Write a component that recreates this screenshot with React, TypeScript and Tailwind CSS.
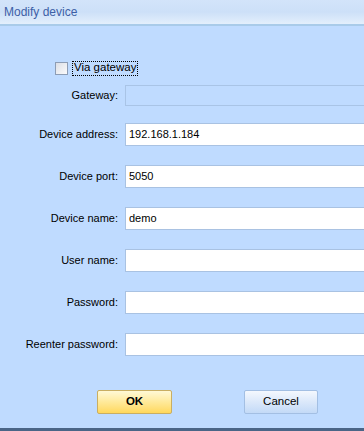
import React from 'react';

const font = { fontFamily: '"Liberation Sans", Arial, sans-serif' };

function Field({ label, value, disabled }: { label: string; value?: string; disabled?: boolean }) {
  return (
    <div className="flex items-center">
      <div className="w-[119px] shrink-0 text-right text-[11px] text-black pr-[1px]">{label}</div>
      <div
        className={
          disabled
            ? 'ml-[6px] h-[21px] w-[250px] shrink-0 border border-[#a9c4e6] bg-[#bfdbff]'
            : 'ml-[6px] h-[23px] w-[250px] shrink-0 border border-[#a9c2e2] bg-white pl-[3px] pt-[3px] text-[11px] leading-[14px] text-black'
        }
      >
        {value}
      </div>
    </div>
  );
}

export default function App() {
  return (
    <div className="w-[364px] h-[431px] bg-[#bfdbff] flex flex-col overflow-hidden" style={font}>
      {/* Title bar */}
      <div className="h-[26px] shrink-0 bg-gradient-to-b from-[#d3e4fa] via-[#cde0f8] to-[#e3effc] border-b-2 border-[#a9cbe9] flex items-center pl-[4px]">
        <span className="text-[12px] text-[#3d5fa6]">Modify device</span>
      </div>

      {/* Via gateway */}
      <div className="mt-[35px] flex items-center pl-[55px] h-[14px]">
        <div className="w-[13px] h-[13px] border border-[#8d9db5] bg-gradient-to-br from-[#dcdfe6] to-[#fbfbfc]" />
        <div className="ml-[4px] h-[15px] px-[1px] border border-dotted border-black flex items-center text-[11.5px] text-black">
          Via gateway
        </div>
      </div>

      <div className="mt-[10px]">
        <Field label="Gateway:" disabled />
      </div>

      <div className="mt-[17px] flex flex-col gap-[19px]">
        <Field label="Device address:" value="192.168.1.184" />
        <Field label="Device port:" value="5050" />
        <Field label="Device name:" value="demo" />
        <Field label="User name:" />
        <Field label="Password:" />
        <Field label="Reenter password:" />
      </div>

      {/* Buttons */}
      <div className="mt-[34px] flex">
        <button className="ml-[97px] w-[75px] h-[24px] rounded-[2px] border border-[#c9ae62] bg-gradient-to-b from-[#fff9d6] via-[#ffe999] to-[#ffd85a] text-[11.5px] font-bold text-black">
          OK
        </button>
        <button className="ml-[72px] w-[74px] h-[24px] rounded-[2px] border border-[#a3bfe3] bg-gradient-to-b from-[#f4f8fe] via-[#dbe8fa] to-[#c3daf7] text-[11.5px] text-black">
          Cancel
        </button>
      </div>

      <div className="flex-1" />
      <div className="h-[3px] shrink-0 bg-[#4a6587]" />
    </div>
  );
}
